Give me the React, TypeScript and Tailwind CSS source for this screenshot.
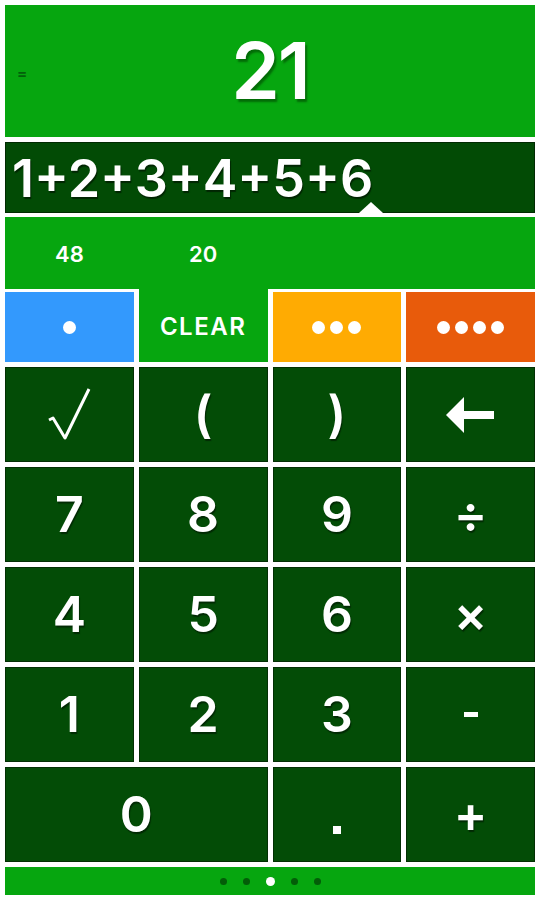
import React from "react";

const F = { fontFamily: "Inter, 'Noto Sans', sans-serif" };

function Key({ children, className = "" }: { children: React.ReactNode; className?: string }) {
  return (
    <div
      className={`flex items-center justify-center bg-[#034c06] border border-[#022f03] text-white text-[50px] font-semibold [text-shadow:1px_2px_1px_rgba(0,0,0,0.45)] ${className}`}
    >
      {children}
    </div>
  );
}

function Dots({ n }: { n: number }) {
  return (
    <div className="flex gap-[5px]">
      {Array.from({ length: n }).map((_, i) => (
        <div key={i} className="w-[13px] h-[13px] rounded-full bg-white" />
      ))}
    </div>
  );
}

export default function App() {
  return (
    <div style={F} className="w-[540px] h-[900px] bg-white p-[5px] flex flex-col">
      {/* display */}
      <div className="relative h-[132px] bg-[#06a60f] flex items-center justify-center">
        <span className="absolute left-[12px] top-[58px] text-[15px] text-[#03600a] font-bold">=</span>
        <span className="text-white text-[78px] font-semibold leading-none tracking-[-2px] [text-shadow:2px_3px_2px_rgba(0,60,0,0.55)]">
          21
        </span>
      </div>
      {/* expression */}
      <div className="relative mt-[5px] h-[71px] bg-[#024b05] border border-[#012a02] flex items-center pl-[6px]">
        <span className="text-white text-[52px] font-semibold leading-none tracking-[0px] mt-[2px] [text-shadow:1px_2px_1px_rgba(0,0,0,0.5)]">
          1+2+3+4+5+6
        </span>
        <svg className="absolute left-[353px] bottom-[-1px]" width="24" height="11" viewBox="0 0 24 11">
          <polygon points="0,11 12,0 24,11" fill="white" />
        </svg>
      </div>
      {/* memory panel */}
      <div className="mt-[4px] h-[72px] bg-[#06a60f] grid grid-cols-4 gap-[5px]">
        <div className="flex items-center justify-center text-white text-[22px] font-semibold pt-[2px]">48</div>
        <div className="flex items-center justify-center text-white text-[22px] font-semibold pt-[2px]">20</div>
      </div>
      {/* color row */}
      <div className="h-[73px] grid grid-cols-4 gap-[5px] items-end bg-white">
        <div className="h-[70px] bg-[#3399fd] flex items-center justify-center">
          <Dots n={1} />
        </div>
        <div className="h-[73px] bg-[#06a60f] flex items-center justify-center pt-[3px] text-white text-[24px] font-semibold tracking-[1.5px]">
          CLEAR
        </div>
        <div className="h-[70px] bg-[#ffab02] flex items-center justify-center">
          <Dots n={3} />
        </div>
        <div className="h-[70px] bg-[#e85b0b] flex items-center justify-center">
          <Dots n={4} />
        </div>
      </div>
      {/* keys */}
      <div className="mt-[5px] grid grid-cols-4 grid-rows-5 gap-[5px] h-[495px]">
        <Key>
          <svg width="44" height="56" viewBox="0 0 44 56">
            <path d="M2 33 L6 31 L18 51 L42 2" fill="none" stroke="white" strokeWidth="3" strokeLinejoin="round" />
          </svg>
        </Key>
        <Key className="font-light text-[44px]">(</Key>
        <Key className="font-light text-[44px]">)</Key>
        <Key>
          <svg width="50" height="38" viewBox="0 0 50 38">
            <polygon points="0,19 18,1 18,15 48,15 48,23 18,23 18,37" fill="white" />
          </svg>
        </Key>
        <Key>7</Key>
        <Key>8</Key>
        <Key>9</Key>
        <Key className="text-[40px] font-normal">÷</Key>
        <Key>4</Key>
        <Key>5</Key>
        <Key>6</Key>
        <Key className="text-[36px] font-normal">×</Key>
        <Key>1</Key>
        <Key>2</Key>
        <Key>3</Key>
        <Key>
          <div className="w-[14px] h-[5px] bg-white" />
        </Key>
        <Key className="col-span-2">0</Key>
        <Key>
          <div className="w-[8px] h-[8px] bg-white mt-[30px]" />
        </Key>
        <Key className="text-[48px]">+</Key>
      </div>
      {/* bottom bar */}
      <div className="mt-[5px] h-[28px] bg-[#06a60f] flex items-center justify-center gap-[16px]">
        <div className="w-[7px] h-[7px] rounded-full bg-[#035d08]" />
        <div className="w-[7px] h-[7px] rounded-full bg-[#035d08]" />
        <div className="w-[9px] h-[9px] rounded-full bg-white" />
        <div className="w-[7px] h-[7px] rounded-full bg-[#035d08]" />
        <div className="w-[7px] h-[7px] rounded-full bg-[#035d08]" />
      </div>
    </div>
  );
}
